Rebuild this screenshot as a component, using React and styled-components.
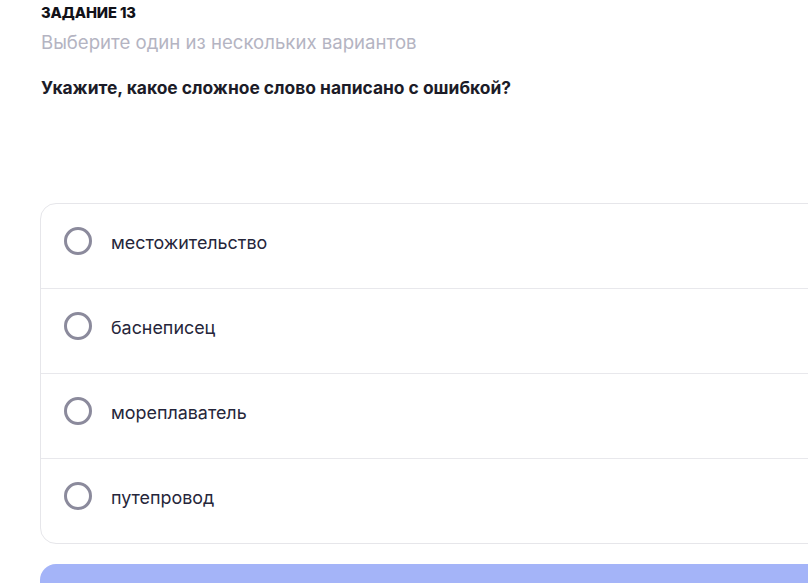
import React from "react";
import styled, { createGlobalStyle } from "styled-components";

const Global = createGlobalStyle`
  html, body { margin: 0; padding: 0; background: #fff; overflow: hidden; }
  body { font-family: Inter, "Noto Sans", sans-serif; }
`;

const Page = styled.div`
  width: 900px;
  padding: 4px 0 0 41px;
  box-sizing: border-box;
`;

const Label = styled.div`
  font-size: 14.7px;
  font-weight: 800;
  color: #111118;
  line-height: 18px;
  letter-spacing: -0.1px;
`;

const Hint = styled.div`
  margin-top: 9px;
  font-size: 18.6px;
  color: #b4b4c2;
  line-height: 22px;
`;

const Question = styled.div`
  margin-top: 24px;
  font-size: 17.4px;
  font-weight: 700;
  color: #1c1c28;
  line-height: 22px;
`;

const Card = styled.div`
  margin-top: 104px;
  margin-left: -1px;
  border: 1px solid #e6e6ea;
  border-radius: 16px;
  background: #fff;
`;

const Row = styled.label`
  display: flex;
  align-items: flex-start;
  gap: 19px;
  height: 84px;
  box-sizing: content-box;
  padding: 0 0 0 23px;
  border-top: ${(p) => (p.$first ? "none" : "1px solid #e8e8ec")};
  cursor: pointer;
`;

const Radio = styled.span`
  margin-top: 23px;
  width: 28px;
  height: 28px;
  box-sizing: border-box;
  border: 3px solid #8b8a9c;
  border-radius: 50%;
  flex-shrink: 0;
`;

const Option = styled.span`
  margin-top: 25px;
  font-size: 17.9px;
  line-height: 28px;
  color: #26263a;
`;

const Submit = styled.button`
  display: block;
  margin-top: 20px;
  margin-left: -1px;
  width: 100%;
  height: 56px;
  border: none;
  border-radius: 16px;
  background: #a4b4f8;
`;

const options = ["местожительство", "баснеписец", "мореплаватель", "путепровод"];

export default function App() {
  return (
    <>
      <Global />
      <Page>
        <Label>ЗАДАНИЕ 13</Label>
        <Hint>Выберите один из нескольких вариантов</Hint>
        <Question>Укажите, какое сложное слово написано с ошибкой?</Question>
        <Card>
          {options.map((o, i) => (
            <Row key={o} $first={i === 0}>
              <Radio />
              <Option>{o}</Option>
            </Row>
          ))}
        </Card>
        <Submit />
      </Page>
    </>
  );
}
